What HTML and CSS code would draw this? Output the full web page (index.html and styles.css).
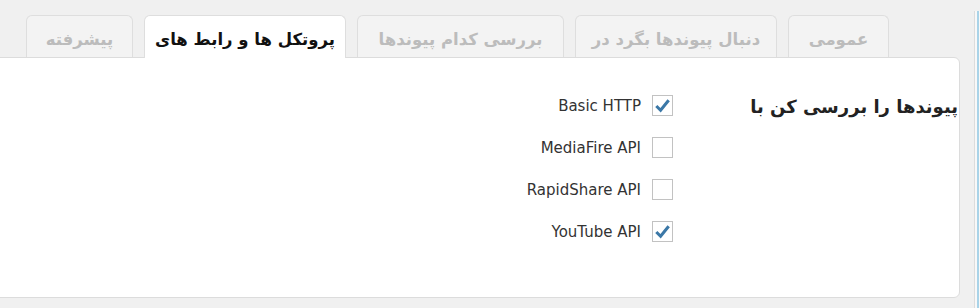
FILE: index.html
```html
<!DOCTYPE html>
<html lang="fa" dir="rtl">
<head>
<meta charset="utf-8">
<title>تنظیمات</title>
<link rel="stylesheet" href="styles.css">
</head>
<body>
<div class="page">
  <div class="sidemenu"><div class="sideline"></div></div>
  <div class="main">
    <div class="tabs">
      <div class="tab tab-general">عمومی</div>
      <div class="tab tab-where">دنبال پیوندها بگرد در</div>
      <div class="tab tab-which">بررسی کدام پیوندها</div>
      <div class="tab tab-protocols active">پروتکل ها و رابط های</div>
      <div class="tab tab-advanced">پیشرفته</div>
    </div>
    <div class="panel">
      <div class="row">
        <div class="heading">پیوندها را بررسی کن با</div>
        <div class="options">
          <label class="opt"><span class="cb checked"><svg viewBox="0 0 20 20" width="19" height="19"><path d="M3.5 10.5 L8 15 L16.5 4.5" fill="none" stroke="#3b78a7" stroke-width="3.2"/></svg></span><span class="lbl">Basic HTTP</span></label>
          <label class="opt"><span class="cb"></span><span class="lbl">MediaFire API</span></label>
          <label class="opt"><span class="cb"></span><span class="lbl">RapidShare API</span></label>
          <label class="opt"><span class="cb checked"><svg viewBox="0 0 20 20" width="19" height="19"><path d="M3.5 10.5 L8 15 L16.5 4.5" fill="none" stroke="#3b78a7" stroke-width="3.2"/></svg></span><span class="lbl">YouTube API</span></label>
        </div>
      </div>
    </div>
  </div>
</div>
</body>
</html>
```
FILE: styles.css
```css
html, body {
  margin: 0;
  padding: 0;
  background: #f0f0f0;
}
body {
  width: 980px;
  height: 308px;
  overflow: hidden;
  font-family: "DejaVu Sans", "Noto Sans", sans-serif;
}
.page {
  display: flex;
  flex-direction: row;
  direction: rtl;
  width: 980px;
}
.sidemenu {
  width: 5px;
  margin-top: 11px;
  height: 297px;
  border-left: 1px solid #dcdcdc;
  background: #f8f8f8;
  display: flex;
  justify-content: flex-start;
}
.sideline {
  width: 2px;
  margin-right: 1px;
  background: #a9d3e8;
}
.main {
  width: 974px;
  display: flex;
  flex-direction: column;
}
.tabs {
  display: flex;
  flex-direction: row;
  align-items: flex-start;
  gap: 11px;
  padding-top: 15px;
  margin-right: 85px;
  height: 57px;
  box-sizing: border-box;
  position: relative;
  z-index: 2;
}
.tab {
  flex: none;
  height: 42px;
  box-sizing: border-box;
  border: 1px solid #dedede;
  border-bottom: none;
  border-radius: 6px 6px 0 0;
  background: #f3f3f3;
  color: #bcbcbc;
  font-weight: bold;
  font-size: 16.5px;
  text-align: center;
  line-height: 48px;
  white-space: nowrap;
}
.tab-general { width: 101px; }
.tab-where { width: 202px; }
.tab-which { width: 207px; }
.tab-protocols { width: 202px; }
.tab-advanced { width: 107px; }
.tab.active {
  background: #fff;
  color: #111;
  height: 43px;
}
.panel {
  margin-right: 14px;
  margin-left: -10px;
  height: 241px;
  box-sizing: border-box;
  background: #fff;
  border: 1px solid #dcdcdc;
  border-radius: 6px;
  position: relative;
  z-index: 1;
}
.row {
  display: flex;
  flex-direction: row;
  padding-top: 37px;
}
.heading {
  width: 285px;
  font-weight: bold;
  font-size: 18px;
  color: #222;
  line-height: 24px;
  margin-right: 1px;
  white-space: nowrap;
}
.options {
  display: flex;
  flex-direction: column;
  gap: 21px;
}
.opt {
  display: flex;
  flex-direction: row;
  align-items: center;
  gap: 11px;
  height: 21px;
}
.cb {
  width: 21px;
  height: 21px;
  box-sizing: border-box;
  border: 1px solid #c2c2c2;
  background: #fff;
  display: flex;
  align-items: center;
  justify-content: center;
}
.lbl {
  font-size: 15px;
  color: #333;
  direction: ltr;
}
```
